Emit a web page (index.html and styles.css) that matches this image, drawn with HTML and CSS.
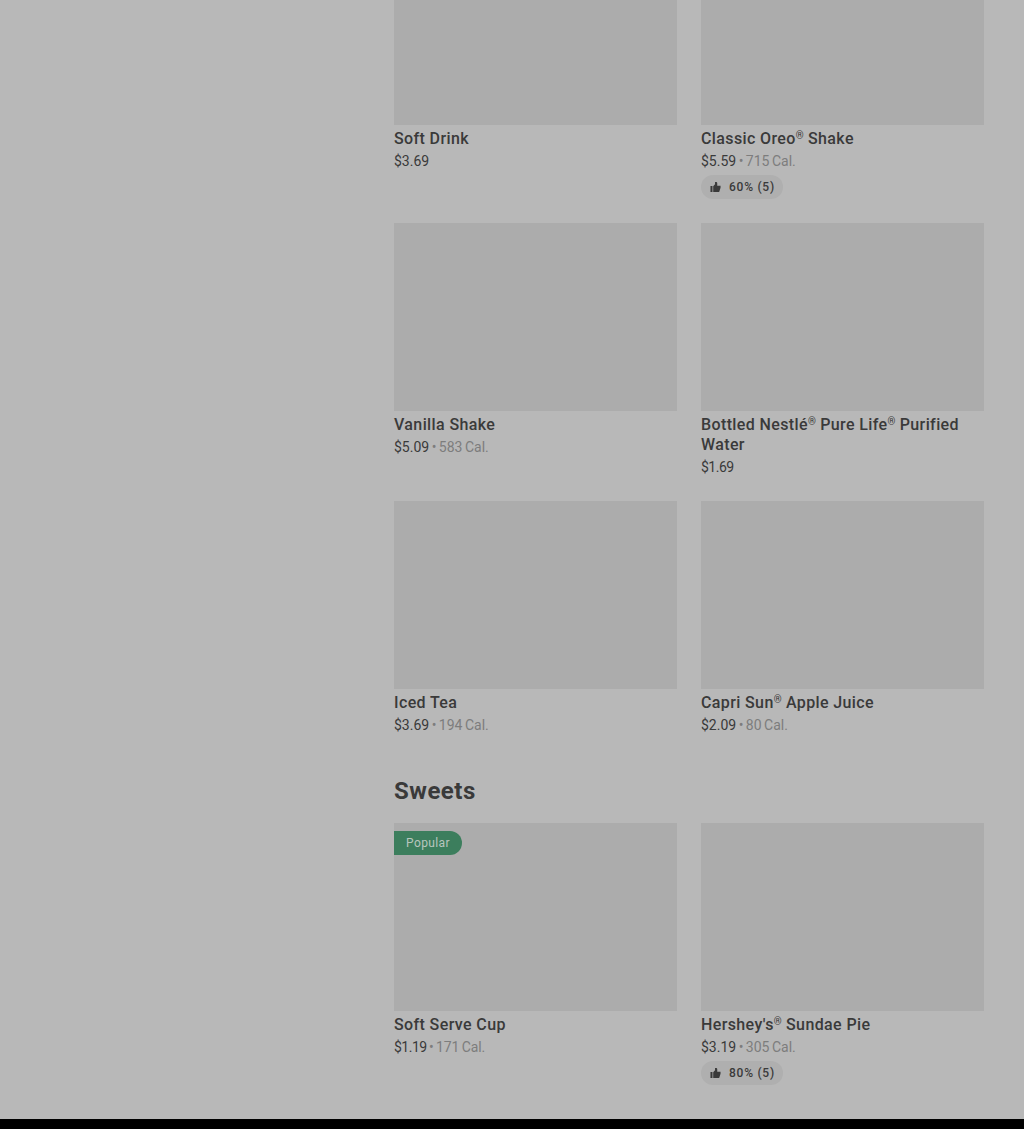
FILE: index.html
```
<!DOCTYPE html>
<html lang="en">
<head>
    <meta charset="UTF-8">
    <meta name="viewport" content="width=device-width, initial-scale=1.0">
    <title>Menu</title>
    <link rel="stylesheet" href="styles.css">
</head>
<body>
    <div class="page">
        <main class="menu">
            <section class="items drinks">
                <article class="item">
                    <div class="photo"></div>
                    <h3 class="name">Soft Drink</h3>
                    <p class="price">$3.69</p>
                </article>
                <article class="item">
                    <div class="photo"></div>
                    <h3 class="name">Classic Oreo<span class="reg">®</span> Shake</h3>
                    <p class="price">$5.59<span class="cal"> • 715 Cal.</span></p>
                    <div class="rating">
                        <svg class="thumb" viewBox="0 0 12 12"><path d="M0.5 5h2.2v6.5H0.5zM3.5 5.3L5.5 3V0.5h1.2q1.2 0 1.2 1.3v2.7h3.6v2.2L10 11.5H3.5z"/></svg>
                        <span class="score">60% (5)</span>
                    </div>
                </article>
                <article class="item">
                    <div class="photo"></div>
                    <h3 class="name">Vanilla Shake</h3>
                    <p class="price">$5.09<span class="cal"> • 583 Cal.</span></p>
                </article>
                <article class="item">
                    <div class="photo"></div>
                    <h3 class="name">Bottled Nestlé<span class="reg">®</span> Pure Life<span class="reg">®</span> Purified Water</h3>
                    <p class="price tight">$1.69</p>
                </article>
                <article class="item">
                    <div class="photo"></div>
                    <h3 class="name">Iced Tea</h3>
                    <p class="price">$3.69<span class="cal"> • 194 Cal.</span></p>
                </article>
                <article class="item">
                    <div class="photo"></div>
                    <h3 class="name">Capri Sun<span class="reg">®</span> Apple Juice</h3>
                    <p class="price">$2.09<span class="cal"> • 80 Cal.</span></p>
                </article>
            </section>

            <h2 class="heading">Sweets</h2>
            <section class="items">
                <article class="item">
                    <div class="photo"><span class="popular">Popular</span></div>
                    <h3 class="name">Soft Serve Cup</h3>
                    <p class="price tight">$1.19<span class="cal"> • 171 Cal.</span></p>
                </article>
                <article class="item">
                    <div class="photo"></div>
                    <h3 class="name">Hershey's<span class="reg">®</span> Sundae Pie</h3>
                    <p class="price">$3.19<span class="cal"> • 305 Cal.</span></p>
                    <div class="rating">
                        <svg class="thumb" viewBox="0 0 12 12"><path d="M0.5 5h2.2v6.5H0.5zM3.5 5.3L5.5 3V0.5h1.2q1.2 0 1.2 1.3v2.7h3.6v2.2L10 11.5H3.5z"/></svg>
                        <span class="score">80% (5)</span>
                    </div>
                </article>
            </section>
        </main>
    </div>
</body>
</html>
```
FILE: styles.css
```
body {
    margin: 0;
    background: #000;
    color: #3a3a3a;
    font-family: Roboto, "Liberation Sans", sans-serif;
}

.page {
    height: 1119px;
    padding: 0 40px 0 394px;
    background: #b8b8b8;
    box-sizing: border-box;
    overflow: hidden;
}

.items {
    display: grid;
    grid-template-columns: 1fr 1fr;
    gap: 24px;
}

/* the first row is scrolled part way out of view */
.drinks {
    margin-top: -63px;
}

.photo {
    height: 188px;
    padding-top: 8px;
    background: #acacac;
    box-sizing: border-box;
}

.name {
    margin: 4px 0 2px;
    font-size: 16px;
    line-height: 20px;
    font-weight: 500;
    letter-spacing: 0.38px;
}

.reg {
    font-size: 10px;
    line-height: 1;
    vertical-align: 5px;
    letter-spacing: 0;
}

.price {
    margin: 0;
    font-size: 14px;
    line-height: 20px;
}

.tight {
    letter-spacing: -0.5px;
}

.cal {
    color: #7d7d7d;
    word-spacing: -1px;
}

.tight .cal {
    letter-spacing: -0.1px;
}

.rating {
    display: flex;
    align-items: center;
    width: 82px;
    height: 24px;
    margin-top: 4px;
    padding-left: 9px;
    border-radius: 12px;
    background: #afafaf;
    box-sizing: border-box;
}

.thumb {
    width: 11px;
    height: 12px;
    margin-right: 8px;
    fill: #3a3a3a;
}

.score {
    font-size: 12px;
    line-height: 24px;
    font-weight: 500;
    letter-spacing: 0.75px;
}

.heading {
    margin: 40px 0 16px;
    font-size: 24px;
    line-height: 32px;
    font-weight: 700;
    letter-spacing: 0.5px;
}

.popular {
    display: block;
    width: 68px;
    height: 24px;
    padding-left: 12px;
    border-radius: 0 12px 12px 0;
    background: #3c7e5d;
    color: #b8c6be;
    font-size: 12px;
    line-height: 24px;
    letter-spacing: 0.4px;
    box-sizing: border-box;
}
```
